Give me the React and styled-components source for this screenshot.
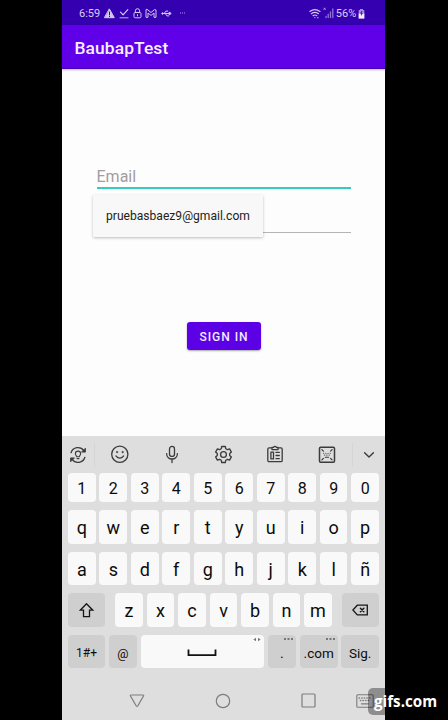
import React from "react";
import styled, { createGlobalStyle, css } from "styled-components";

const GlobalStyle = createGlobalStyle`
  * { box-sizing: border-box; }
  body { margin: 0; background: #000; font-family: Roboto, "Liberation Sans", sans-serif; }
`;

const Stage = styled.div`
  position: relative;
  width: 448px;
  height: 720px;
  padding-left: 62px;
  background: #000;
  overflow: hidden;
`;
const Phone = styled.main`
  width: 323px;
  height: 720px;
  display: flex;
  flex-direction: column;
  background: #fdfdfd;
`;
const StatusBar = styled.header`
  height: 25px;
  flex: none;
  display: flex;
  align-items: center;
  justify-content: space-between;
  padding: 1px 20px 0 17px;
  background: #3500b0;
  color: #d9ccf3;
  font-size: 11px;
`;
const StatusGroup = styled.div`
  display: flex;
  align-items: center;
  gap: ${(p) => p.$gap}px;
  svg { display: block; }
`;
const AppBar = styled.div`
  position: relative;
  height: 44px;
  flex: none;
  display: flex;
  align-items: center;
  padding: 3px 12.5px 0;
  background: #6000e8;
  border-bottom: 1px solid #4a00b8;
  box-shadow: 0 1px 2px rgba(60, 30, 110, 0.3);
  color: #f7f1ff;
  font-size: 17.4px;
  font-weight: 500;
  letter-spacing: 0.1px;
`;
const Form = styled.form`
  position: relative;
  flex: 1;
  display: flex;
  flex-direction: column;
  padding: 94px 35px 0 34.5px;
`;
const EmailField = styled.div`
  height: 26px;
  width: 254px;
  border-bottom: 2px solid #30cfbd;
  color: #a09da0;
  font-size: 16px;
  line-height: 27px;
`;
const PasswordField = styled.div`
  height: 44px;
  width: 254px;
  border-bottom: 1px solid #b5b5b5;
`;
const Suggestion = styled.div`
  position: absolute;
  left: 31px;
  top: 126px;
  width: 170px;
  height: 42px;
  padding-left: 13px;
  background: #f8f8f8;
  border-radius: 1px;
  box-shadow: 0 1px 3px rgba(0, 0, 0, 0.26);
  color: #222;
  font-size: 12.1px;
  line-height: 43px;
  white-space: nowrap;
`;
const SignIn = styled.button`
  align-self: center;
  width: 74px;
  height: 28px;
  margin: 89px 0 0 0.5px;
  padding: 1px 0 0 1px;
  border: 0;
  border-radius: 3px;
  background: #5c00e6;
  box-shadow: 0 1px 2px rgba(0, 0, 0, 0.35);
  color: #f2eaff;
  font: 500 12px Roboto, sans-serif;
  letter-spacing: 1px;
`;
const Keyboard = styled.section`
  height: 284px;
  flex: none;
  display: flex;
  flex-direction: column;
  background: #dedede;
`;
const Tools = styled.div`
  height: 37px;
  display: flex;
`;
const Tool = styled.div`
  width: ${(p) => (p.$edge ? "32px" : "auto")};
  flex: ${(p) => (p.$edge ? "none" : "1")};
  display: flex;
  align-items: center;
  justify-content: center;
`;
const Divider = styled.div`
  width: 1px;
  height: 24px;
  margin: 7px -0.5px 0;
  background: #d5d5d5;
`;
const Keys = styled.div`
  display: flex;
  flex-direction: column;
  gap: 8px;
  padding: 0 6px;
`;
const KeyRow = styled.div`
  display: flex;
  justify-content: space-between;
  height: ${(p) => p.$h || 33.6}px;
`;
const Letters = styled.div`
  display: flex;
  gap: 3.9px;
`;
const Key = styled.div`
  position: relative;
  width: ${(p) => p.$w || 27.6}px;
  height: 100%;
  padding-top: ${(p) => p.$down || 2}px;
  display: flex;
  align-items: center;
  justify-content: center;
  border-radius: 4px;
  background: #f9f9f9;
  color: #0c0c0c;
  font-size: ${(p) => p.$size || 18}px;
  ${(p) => p.$dark && css`background: #cfcfcf;`}
`;
const Hint = styled.svg`
  position: absolute;
  right: 3px;
  top: 2px;
`;
const NavBar = styled.nav`
  flex: 1;
  display: flex;
  align-items: center;
  padding: 13px 0 0 32.5px;
`;
const NavItem = styled.div`
  width: ${(p) => p.$w || 85.8}px;
  display: flex;
  justify-content: center;
`;
const Watermark = styled.div`
  position: absolute;
  left: 368px;
  top: 688px;
  width: 76px;
  height: 27px;
  padding-left: 6px;
  border-radius: 5px;
  background: rgba(0, 0, 0, 0.36);
  color: #fff;
  font: 700 15.2px/26px "Open Sans", sans-serif;
  white-space: nowrap;
`;

const Icon = ({ w = 20, h = w, box = `0 0 ${w} ${h}`, color = "#3b3b3b", sw = 1.3, children }) => (
  <svg width={w} height={h} viewBox={box} fill="none" stroke={color} strokeWidth={sw} strokeLinecap="round" strokeLinejoin="round">
    {children}
  </svg>
);
const pale = "#d3c6ef";

const WarningIcon = () => (
  <Icon w={11} h={11} color={pale} sw={1}>
    <path d="M5.5 1.2 10.3 9.7H.7Z" fill={pale} />
    <path d="M5.5 4v2.8M5.5 8.2v.4" stroke="#3500b0" />
  </Icon>
);
const CheckIcon = () => (
  <Icon w={10} h={11} color={pale} sw={1.2}>
    <path d="m1.5 4.2 2.6 2.6L8.8 1.7" /><path d="M1 9.8h8" strokeWidth="0.9" />
  </Icon>
);
const LockIcon = () => (
  <Icon w={9} h={11} color={pale} sw={1}>
    <rect x="1" y="4.5" width="7" height="5.3" rx="1.2" />
    <path d="M2.4 4.3V2.8a2.1 2.1 0 0 1 4.2 0v1.5M4.5 6.6v1.2" />
  </Icon>
);
const MailIcon = () => (
  <Icon w={12} h={11} color={pale} sw={1}>
    <path d="M1 2v7.3h2V5l3 2.4L9 5v4.3h2V2L9.7 1.5 6 4.5 2.3 1.5Z" />
  </Icon>
);
const UsbIcon = () => (
  <Icon w={11} h={9} color={pale} sw={1}>
    <path d="M1.6 4.5h7.6M3.2 4.5l1.7-2.4h1.8M4.3 4.5 6 6.9h1.6" />
    <circle cx="1.6" cy="4.5" r=".8" fill={pale} /><path d="m8.5 3.3 1.7 1.2-1.7 1.2Z" fill={pale} />
  </Icon>
);
const DotsIcon = () => (
  <Icon w={5} h={2} color="#b9a5e5" sw={1}><path d="M.5 1h.2M2.5 1h.1M4.4 1h.1" /></Icon>
);
const WifiIcon = () => (
  <Icon w={12} h={11} color={pale} sw={1.1}>
    <path d="M.8 3.5q5-3.8 10.2 0M2.3 5.7q3.6-2.7 7.2 0M4 7.7q2-1.3 3.8 0" />
    <path d="M5.9 9.4v.2M8.5 9.7h.6" />
  </Icon>
);
const SignalIcon = () => (
  <Icon w={11} h={12} color="#9273d6" sw={1.3}>
    <path d="M3 10.5V9.3M5.2 10.5V7.2M7.5 10.5V4.8M9.8 10.5V1.8" />
    <path d="m.8 1 1.6 1.6M2.4 1 .8 2.6" strokeWidth=".7" stroke={pale} />
  </Icon>
);
const BatteryIcon = () => (
  <Icon w={7} h={11} color="none">
    <path d="M2 1h3v1h1.3v8.5H.7V2H2Z" fill="#a489dd" />
    <path d="M.7 5.5h1.5L3.5 8l1.3-2.5h1.5v5H.7Z" fill="#f3ecff" />
    <path d="M3.1 3.3h1.3L3.8 5h1L3.2 7.8V5.7h-.9Z" fill="#4b14bc" />
  </Icon>
);

const SwapIcon = () => (
  <Icon w={18}>
    <path d="M2.1 6.7A7.2 7.2 0 0 1 14.8 4.6M15.9 11.3A7.2 7.2 0 0 1 3.2 13.4" />
    <path d="M16.4 2.6v3.5h-3.5ZM1.6 15.4v-3.5h3.5Z" fill="#3b3b3b" strokeWidth=".9" />
    <path d="M7.7 10.7c0-1-1.3-1.4-1.3-3a2.6 2.6 0 0 1 5.2 0c0 1.6-1.3 2-1.3 3ZM8 12.6h2" strokeWidth="1.1" />
  </Icon>
);
const SmileIcon = () => (
  <Icon w={19}>
    <circle cx="9.8" cy="9.2" r="8.1" /><path d="M5.9 10.9q3.9 4.6 7.8 0" />
    <circle cx="7" cy="7.1" r=".8" fill="#3b3b3b" strokeWidth=".4" /><circle cx="12.6" cy="7.1" r=".8" fill="#3b3b3b" strokeWidth=".4" />
  </Icon>
);
const MicIcon = () => (
  <Icon w={16} h={19}>
    <rect x="5.5" y="1.4" width="5" height="10" rx="2.5" /><path d="M2.6 8.6c0 7.2 10.8 7.2 10.8 0M8 14v3.6" />
  </Icon>
);
const GearIcon = () => (
  <Icon w={19}>
    <circle cx="9.5" cy="9.5" r="2.9" />
    <path d="M7.7 1.5h3.6l.5 2.3 1.6.9 2.2-.8 1.8 3.2-1.7 1.5v1.8l1.7 1.5-1.8 3.2-2.2-.8-1.6.9-.5 2.3H7.7l-.5-2.3-1.6-.9-2.2.8-1.8-3.2 1.7-1.5V8.6L1.6 7.1l1.8-3.2 2.2.8 1.6-.9Z" />
  </Icon>
);
const ClipboardIcon = () => (
  <Icon w={18} h={19}>
    <rect x="1.8" y="2.9" width="14.4" height="13.8" rx="1.3" />
    <path d="M6 4.6V2.3h1.5q1.5-2 3 0H12v2.3Z" fill="#dedede" />
    <path d="M4.9 7.2h2.6v6.7H4.9ZM10 7.4h3.3M10 10.5h3.3M10 13.7h3.3" />
  </Icon>
);
const ResizeIcon = () => (
  <Icon w={18} h={18}>
    <rect x="1.5" y="1.3" width="15" height="15" rx="1.2" strokeWidth="1.5" />
    <path d="M3.9 3.7l1.5 1.5M14.1 3.7l-1.5 1.5M3.9 13.9l1.5-1.5M14.1 13.9l-1.5-1.5" strokeWidth="1.2" />
    <path d="M5.6 7.2h.1M7.8 7.2h.1M10 7.2h.1M12.2 7.2h.1M6.7 9.1h.1M8.9 9.1h.1M11.1 9.1h.1M7.3 11.2h3.3" strokeWidth="1.1" />
  </Icon>
);
const ChevronIcon = () => <Icon w={12} h={8} sw={1.4}><path d="m1.6 1.8 4.4 4.3 4.4-4.3" /></Icon>;
const ShiftIcon = () => (
  <Icon w={16} h={16} color="#161616" sw={1.3}><path d="M7.5 .7 13.8 7.2H10.5v6.4H4.5V7.2H1.2Z" strokeLinejoin="miter" /></Icon>
);
const BackspaceIcon = () => (
  <Icon w={17} h={13} color="#161616" sw={1.3}>
    <path d="M5.3 1.2h10v9.7h-10L.9 6Z" strokeLinejoin="miter" /><path d="m8.4 4.3 3.4 3.4M11.8 4.3 8.4 7.7" strokeWidth="1.5" />
  </Icon>
);
const SpaceIcon = () => (
  <svg width="30" height="8" viewBox="0 0 30 8" fill="none" stroke="#111" strokeWidth="1.8"><path d="M1.5.5v5.7h27V.5" /></svg>
);
const MoreHint = () => (
  <Hint width="9" height="4" viewBox="0 0 9 4" fill="#777"><path d="M0 1h2v2H0ZM3.5 1h2v2h-2ZM7 1h2v2H7Z" /></Hint>
);
const SpaceHint = () => (
  <Hint width="8" height="5" viewBox="0 0 8 5" fill="#777"><path d="M3 .7v3.6L.3 2.5ZM5 .7v3.6l2.7-1.8Z" /></Hint>
);
const nav = "#7c7c7c";
const KeyboardIcon = () => (
  <Icon w={18} h={14} color={nav} sw={1.1}>
    <rect x=".8" y=".8" width="16.4" height="12.4" rx="1" />
    <path d="M3 4h.5M5.6 4h.5M8.2 4h.5M10.8 4h.5M13.4 4h.5M4.3 6.5h.5M6.9 6.5h.5M9.5 6.5h.5M12.1 6.5h.5M5.5 9.8h7" strokeWidth="1.3" />
  </Icon>
);

const letterKeys = (text, size) => [...text].map((c) => <Key key={c} $size={size}>{c}</Key>);

export default function App() {
  return (
    <Stage>
      <GlobalStyle />
      <Phone>
        <StatusBar>
          <StatusGroup $gap={3.8}>
            <span>6:59</span>
            <WarningIcon /><CheckIcon /><LockIcon /><MailIcon /><UsbIcon />
            <StatusGroup $gap={0}><Icon w={4} h={2} /><DotsIcon /></StatusGroup>
          </StatusGroup>
          <StatusGroup $gap={1.8}>
            <WifiIcon /><SignalIcon /><span>56%</span><BatteryIcon />
          </StatusGroup>
        </StatusBar>
        <AppBar>BaubapTest</AppBar>
        <Form>
          <EmailField>Email</EmailField>
          <PasswordField />
          <SignIn type="button">SIGN IN</SignIn>
          <Suggestion>pruebasbaez9@gmail.com</Suggestion>
        </Form>
        <Keyboard>
          <Tools>
            <Tool $edge><SwapIcon /></Tool>
            <Divider />
            <Tool><SmileIcon /></Tool>
            <Tool><MicIcon /></Tool>
            <Tool><GearIcon /></Tool>
            <Tool><ClipboardIcon /></Tool>
            <Tool><ResizeIcon /></Tool>
            <Divider />
            <Tool $edge><ChevronIcon /></Tool>
          </Tools>
          <Keys>
            <KeyRow $h={29}>{letterKeys("1234567890", 16)}</KeyRow>
            <KeyRow>{letterKeys("qwertyuiop")}</KeyRow>
            <KeyRow>{letterKeys("asdfghjklñ")}</KeyRow>
            <KeyRow>
              <Key $dark $w={37}><ShiftIcon /></Key>
              <Letters>{letterKeys("zxcvbnm")}</Letters>
              <Key $dark $w={37}><BackspaceIcon /></Key>
            </KeyRow>
            <KeyRow>
              <Key $dark $w={37} $size={12}>1#+</Key>
              <Key $dark $w={28.4} $size={12.5} $down={3}>@</Key>
              <Key $w={123}><SpaceIcon /><SpaceHint /></Key>
              <Key $dark $w={28.5} $size={14} $down={3}>.<MoreHint /></Key>
              <Key $dark $w={38} $size={13.5} $down={3}>.com<MoreHint /></Key>
              <Key $dark $w={37.6} $size={13.5} $down={3}>Sig.</Key>
            </KeyRow>
          </Keys>
          <NavBar>
            <NavItem><Icon w={16} h={14} color={nav} sw={1.2}><path d="M2 1h12q1 0 .5 1L8.7 12q-.7 1-1.4 0L1.5 2Q1 1 2 1Z" /></Icon></NavItem>
            <NavItem><Icon w={16} color={nav} sw={1.2}><circle cx="8" cy="8" r="6.7" /></Icon></NavItem>
            <NavItem><Icon w={15} color={nav} sw={1.2}><rect x="1" y="1" width="13" height="13" rx="1" /></Icon></NavItem>
            <NavItem $w={26}><KeyboardIcon /></NavItem>
          </NavBar>
        </Keyboard>
      </Phone>
      <Watermark>gifs.com</Watermark>
    </Stage>
  );
}
